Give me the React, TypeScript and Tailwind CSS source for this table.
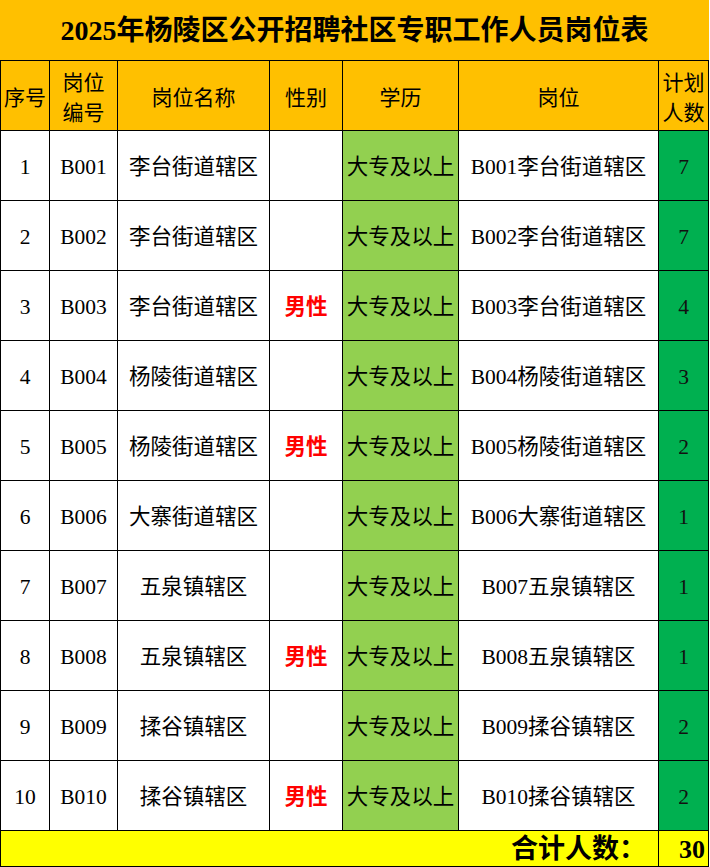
import React from "react";

const rows = [
  { id: "1", code: "B001", name: "李台街道辖区", male: false, n: "7" },
  { id: "2", code: "B002", name: "李台街道辖区", male: false, n: "7" },
  { id: "3", code: "B003", name: "李台街道辖区", male: true, n: "4" },
  { id: "4", code: "B004", name: "杨陵街道辖区", male: false, n: "3" },
  { id: "5", code: "B005", name: "杨陵街道辖区", male: true, n: "2" },
  { id: "6", code: "B006", name: "大寨街道辖区", male: false, n: "1" },
  { id: "7", code: "B007", name: "五泉镇辖区", male: false, n: "1" },
  { id: "8", code: "B008", name: "五泉镇辖区", male: true, n: "1" },
  { id: "9", code: "B009", name: "揉谷镇辖区", male: false, n: "2" },
  { id: "10", code: "B010", name: "揉谷镇辖区", male: true, n: "2" },
];

const serif = "font-['Liberation_Serif','Noto_Sans_CJK_SC',serif]";
const cell = "flex items-center justify-center text-[21.5px] pt-[3px] whitespace-nowrap";

export default function App() {
  return (
    <div className={`w-[710px] h-[867px] bg-white text-black ${serif}`}>
      <div className="w-[709px] h-[60px] bg-[#FFC000] flex items-center justify-center pt-[2px]">
        <span className="text-[28px] font-bold leading-none">
          2025年杨陵区公开招聘社区专职工作人员岗位表
        </span>
      </div>
      <div className="w-[709px] bg-black p-px grid gap-px grid-cols-[48px_67px_151px_72px_115px_199px_49px] grid-rows-[69px_repeat(10,69px)_35px]">
        {[
          ["序号"],
          ["岗位", "编号"],
          ["岗位名称"],
          ["性别"],
          ["学历"],
          ["岗位"],
          ["计划", "人数"],
        ].map((h, i) => (
          <div
            key={i}
            className="bg-[#FFC000] flex flex-col items-center justify-center text-[21px] leading-[30px] font-['Noto_Sans_CJK_SC',sans-serif] whitespace-nowrap"
          >
            {h.map((l, j) => (
              <span key={j}>{l}</span>
            ))}
          </div>
        ))}
        {rows.map((r) => (
          <React.Fragment key={r.id}>
            <div className={`bg-white ${cell}`}>{r.id}</div>
            <div className={`bg-white ${cell}`}>{r.code}</div>
            <div className={`bg-white ${cell}`}>{r.name}</div>
            <div className={`bg-white ${cell} font-bold text-[#FF0000]`}>{r.male ? "男性" : ""}</div>
            <div className={`bg-[#92D050] ${cell}`}>大专及以上</div>
            <div className={`bg-white ${cell}`}>
              {r.code}
              {r.name}
            </div>
            <div className={`bg-[#00B050] ${cell} text-[#111]`}>{r.n}</div>
          </React.Fragment>
        ))}
        <div className="col-span-6 bg-[#FFFF00] flex items-center justify-end pr-[12px] pt-[2px] text-[27px] font-bold leading-none whitespace-nowrap">
          合计人数：
        </div>
        <div className="bg-[#FFFF00] flex items-center justify-end pr-[3px] pt-[2px] text-[26px] font-bold leading-none">
          30
        </div>
      </div>
    </div>
  );
}
